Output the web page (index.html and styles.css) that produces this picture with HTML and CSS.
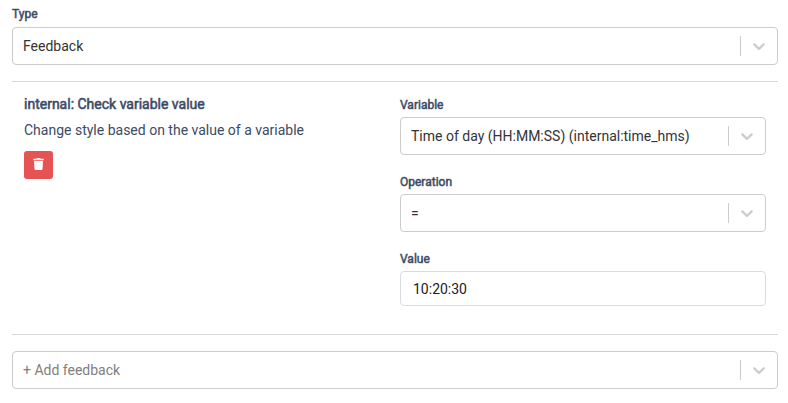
FILE: index.html
```
<!DOCTYPE html>
<html lang="en">
<head>
<meta charset="utf-8">
<title>Feedback</title>
<link rel="stylesheet" href="styles.css">
</head>
<body>
<main class="panel">
  <label class="label">Type</label>
  <div class="select">
    <span class="select-value">Feedback</span>
    <span class="separator"></span>
    <svg class="chevron" viewBox="0 0 20 20"><path d="M4.516 7.548c0.436-0.446 1.043-0.481 1.576 0l3.908 3.747 3.908-3.747c0.533-0.481 1.141-0.446 1.574 0 0.436 0.445 0.408 1.197 0 1.615-0.406 0.418-4.695 4.502-4.695 4.502-0.217 0.223-0.502 0.335-0.787 0.335s-0.57-0.112-0.789-0.335c0 0-4.287-4.084-4.695-4.502s-0.436-1.17 0-1.615z"/></svg>
  </div>
  <section class="feedback">
    <div class="info">
      <div class="name">internal: Check variable value</div>
      <div class="description">Change style based on the value of a variable</div>
      <button class="delete" aria-label="Delete"><svg viewBox="0 0 448 512"><path d="M432 32H312l-9.400-18.700A24 24 0 0 0 281.100 0H166.800a23.700 23.700 0 0 0-21.400 13.300L136 32H16A16 16 0 0 0 0 48v32a16 16 0 0 0 16 16h416a16 16 0 0 0 16-16V48a16 16 0 0 0-16-16zM53.200 467a48 48 0 0 0 47.900 45h245.800a48 48 0 0 0 47.900-45L416 128H32z"/></svg></button>
    </div>
    <div class="options">
      <label class="label">Variable</label>
      <div class="select">
        <span class="select-value">Time of day (HH:MM:SS) (internal:time_hms)</span>
        <span class="separator"></span>
        <svg class="chevron" viewBox="0 0 20 20"><path d="M4.516 7.548c0.436-0.446 1.043-0.481 1.576 0l3.908 3.747 3.908-3.747c0.533-0.481 1.141-0.446 1.574 0 0.436 0.445 0.408 1.197 0 1.615-0.406 0.418-4.695 4.502-4.695 4.502-0.217 0.223-0.502 0.335-0.787 0.335s-0.57-0.112-0.789-0.335c0 0-4.287-4.084-4.695-4.502s-0.436-1.17 0-1.615z"/></svg>
      </div>
      <label class="label">Operation</label>
      <div class="select">
        <span class="select-value">=</span>
        <span class="separator"></span>
        <svg class="chevron" viewBox="0 0 20 20"><path d="M4.516 7.548c0.436-0.446 1.043-0.481 1.576 0l3.908 3.747 3.908-3.747c0.533-0.481 1.141-0.446 1.574 0 0.436 0.445 0.408 1.197 0 1.615-0.406 0.418-4.695 4.502-4.695 4.502-0.217 0.223-0.502 0.335-0.787 0.335s-0.57-0.112-0.789-0.335c0 0-4.287-4.084-4.695-4.502s-0.436-1.17 0-1.615z"/></svg>
      </div>
      <label class="label">Value</label>
      <div class="input">10:20:30</div>
    </div>
  </section>
  <div class="select">
    <span class="select-value placeholder">+ Add feedback</span>
    <span class="separator"></span>
    <svg class="chevron" viewBox="0 0 20 20"><path d="M4.516 7.548c0.436-0.446 1.043-0.481 1.576 0l3.908 3.747 3.908-3.747c0.533-0.481 1.141-0.446 1.574 0 0.436 0.445 0.408 1.197 0 1.615-0.406 0.418-4.695 4.502-4.695 4.502-0.217 0.223-0.502 0.335-0.787 0.335s-0.57-0.112-0.789-0.335c0 0-4.287-4.084-4.695-4.502s-0.436-1.17 0-1.615z"/></svg>
  </div>
</main>
</body>
</html>
```
FILE: styles.css
```
* { box-sizing: border-box; }
body { margin: 0; background: #fff; color: #3c4b64; font: 14px/21px Roboto, sans-serif; }
.panel { padding: 5px 10px 0 12px; }
.label { display: block; height: 22px; font-size: 12px; line-height: 18px; -webkit-text-stroke: 0.5px currentColor; }
.select { display: flex; align-items: center; height: 38px; border: 1px solid #ccc; border-radius: 4px; color: #333; background: #fff; }
.select-value { flex: 1; padding-left: 10px; }
.placeholder { color: #808080; }
.separator { width: 1px; align-self: stretch; margin: 8px 0; background: #ccc; }
.chevron { width: 20px; height: 20px; margin: 0 8px; fill: #ccc; }
.feedback { display: flex; height: 254px; margin: 16px 0; padding: 12px; border-top: 1px solid #d8d8d8; border-bottom: 1px solid #d8d8dc; }
.info { width: 376px; }
.name { -webkit-text-stroke: 0.55px currentColor; }
.description { margin-top: 5px; }
.delete { display: flex; align-items: center; justify-content: center; width: 29px; height: 28px; margin-top: 10px; padding: 0 0 2px; border: 0; border-radius: 3px; background: #e55353; }
.delete svg { width: 11px; height: 12px; fill: #fff; }
.options { flex: 1; padding-top: 2px; }
.options .label { height: 21px; }
.options .select { margin-bottom: 18px; }
.input { height: 35px; padding: 7px 12px 5px; border: 1px solid #d8dbe0; border-radius: 4px; color: #212121; }
```
